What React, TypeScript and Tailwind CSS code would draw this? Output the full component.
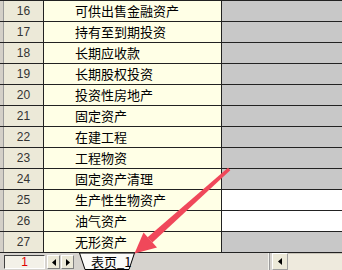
import React from "react";

const rows: [number, string, boolean][] = [
  [16, "可供出售金融资产", false],
  [17, "持有至到期投资", false],
  [18, "长期应收款", false],
  [19, "长期股权投资", false],
  [20, "投资性房地产", false],
  [21, "固定资产", false],
  [22, "在建工程", false],
  [23, "工程物资", false],
  [24, "固定资产清理", false],
  [25, "生产性生物资产", true],
  [26, "油气资产", true],
  [27, "无形资产", false],
];

const cjk = "font-['Noto_Sans_CJK_SC','Noto_Sans',sans-serif]";
const num = "font-['Liberation_Sans',Arial,sans-serif]";

export default function App() {
  return (
    <div className="relative w-[342px] h-[270px] overflow-hidden bg-[#d6d3ce]">
      {/* sheet grid */}
      <div className="flex flex-col pt-px bg-[#222]">
        {rows.map(([n, name, white]) => (
          <div key={n} className="flex h-[21px] border-b border-[#222]">
            <div className="w-[3px] bg-[#d4d0c8]" />
            <div className="w-px bg-[#9a9a9a]" />
            <div
              className={`w-[40px] flex items-center justify-center bg-[#ece9d8] border-r border-[#222] text-[12px] text-[#333] ${num}`}
            >
              {n}
            </div>
            <div
              className={`w-[178px] flex items-center pl-[31px] bg-[#ffffe6] border-r border-[#222] text-[13px] text-black ${cjk}`}
            >
              {name}
            </div>
            <div className={`flex-1 ${white ? "bg-white" : "bg-[#c8c8c8]"}`} />
          </div>
        ))}
      </div>

      {/* sheet tab bar */}
      <div className="flex h-[17px] items-stretch bg-[#d6d3ce]">
        <div className="w-[4px]" />
        <div
          className={`w-[41px] mt-[2px] mb-px flex items-center justify-center bg-[#f3f1e8] border-t border-l border-[#404040] border-b border-r border-b-[#fff] border-r-[#fff] text-[12px] text-[#e00000] ${num}`}
        >
          1
        </div>
        <div className="w-[2px]" />
        <button className="w-[13px] mt-[2px] mb-px flex items-center justify-center bg-[#ece9d8] border border-t-white border-l-white border-b-[#808080] border-r-[#808080]">
          <svg width="4" height="7" viewBox="0 0 4 7">
            <path d="M4 0 L0 3.5 L4 7 Z" fill="#000" />
          </svg>
        </button>
        <button className="w-[13px] mt-[2px] mb-px ml-px flex items-center justify-center bg-[#ece9d8] border border-t-white border-l-white border-b-[#808080] border-r-[#808080]">
          <svg width="4" height="7" viewBox="0 0 4 7">
            <path d="M0 0 L4 3.5 L0 7 Z" fill="#000" />
          </svg>
        </button>
        <div className="w-[5px]" />
        <div className="relative w-[56px]">
          <svg className="absolute inset-0" width="56" height="17" viewBox="0 0 56 17">
            <path d="M0.5 0 L6 16.5 L50 16.5 L55.5 0 Z" fill="#fbfbf8" stroke="#000" strokeWidth="1" />
          </svg>
          <span
            className={`absolute left-[12px] top-0 h-[17px] flex items-center text-[13px] text-black leading-none ${cjk}`}
          >
            表页_1
          </span>
        </div>
        <div className="flex-1" />
        <div className="w-px bg-[#f4f3ee]" />
        <div className="w-px bg-[#9a9a9a]" />
        <div className="w-[2px]" />
        <button className="w-[16px] flex items-center justify-center bg-[#ece9d8] border border-t-white border-l-white border-b-[#a0a0a0] border-r-[#a0a0a0]">
          <svg width="4" height="7" viewBox="0 0 4 7">
            <path d="M4 0 L0 3.5 L4 7 Z" fill="#000" />
          </svg>
        </button>
        <div className="w-[54px] bg-[#eeeadd] border-t border-[#c8c4b8]" />
      </div>

      {/* red pointer arrow */}
      <svg className="absolute left-0 top-0 pointer-events-none" width="342" height="270" viewBox="0 0 342 270">
        <path
          d="M230.3 170.3 L228 167.7 L147.6 237.2 L152.4 242.6 Z"
          fill="#f0485a"
        />
        <path d="M134.5 253.5 L143.5 232.5 L157 247.5 Z" fill="#f0485a" />
      </svg>
    </div>
  );
}
